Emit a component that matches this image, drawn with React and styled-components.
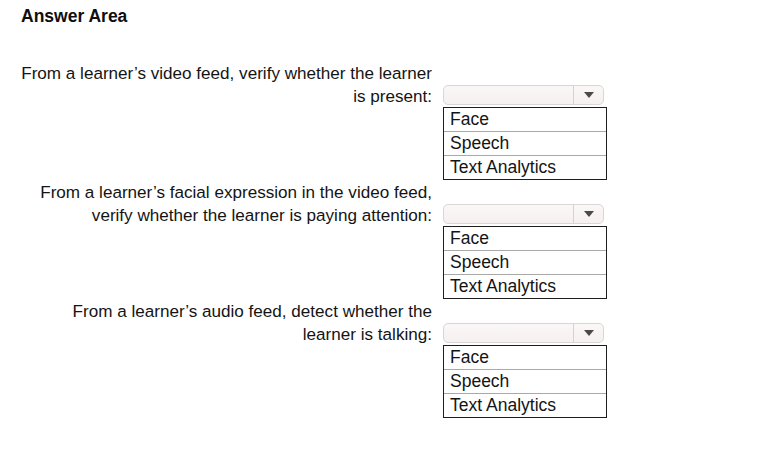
import React from 'react';
import styled, { createGlobalStyle } from 'styled-components';

const GlobalStyle = createGlobalStyle`
  html, body {
    margin: 0;
    padding: 0;
    background: #ffffff;
  }
  body {
    font-family: "Liberation Sans", Arial, sans-serif;
    color: #141414;
  }
`;

const Page = styled.div`
  width: 775px;
  height: 452px;
  padding: 6px 0 0 21px;
  box-sizing: border-box;
  overflow: hidden;
`;

const Heading = styled.h1`
  margin: 0 0 36px 0;
  font-size: 17.5px;
  line-height: 20px;
  font-weight: 700;
  color: #0e0e0e;
`;

const Block = styled.div`
  display: flex;
  align-items: flex-start;
  gap: 11px;
  margin-bottom: 1px;
`;

const Prompt = styled.div`
  width: 411px;
  text-align: right;
  font-size: 17.1px;
  line-height: 23px;
  white-space: nowrap;
`;

const Control = styled.div`
  padding-top: 23px;
  display: flex;
  flex-direction: column;
  gap: 2px;
`;

const Select = styled.div`
  width: 161px;
  height: 20px;
  box-sizing: border-box;
  border: 1px solid #d9d6d6;
  border-radius: 5px;
  background: linear-gradient(#fbf7f7, #f6f0f0);
  display: flex;
  justify-content: flex-end;
`;

const Arrow = styled.div`
  width: 29px;
  border-left: 1px solid #d6d2d2;
  display: flex;
  align-items: center;
  justify-content: center;
`;

const Options = styled.ul`
  list-style: none;
  margin: 0;
  padding: 0;
  width: 164px;
  box-sizing: border-box;
  border: 1px solid #1e1e1e;
`;

const Option = styled.li`
  box-sizing: border-box;
  padding-left: 6px;
  font-size: 17.5px;
  line-height: 23px;
  white-space: nowrap;
  border-top: ${({ $first }) => ($first ? 'none' : '1px solid #a9a9a9')};
  height: ${({ $first }) => ($first ? '23px' : '24px')};
`;

const choices = ['Face', 'Speech', 'Text Analytics'];

const questions = [
  ['From a learner’s video feed, verify whether the learner', 'is present:'],
  ['From a learner’s facial expression in the video feed,', 'verify whether the learner is paying attention:'],
  ['From a learner’s audio feed, detect whether the', 'learner is talking:'],
];

function Dropdown() {
  return (
    <Control>
      <Select>
        <Arrow>
          <svg width="10" height="6" viewBox="0 0 10 6">
            <path d="M0 0 H10 L5 6 Z" fill="#4a4a4a" />
          </svg>
        </Arrow>
      </Select>
      <Options>
        {choices.map((c, i) => (
          <Option key={c} $first={i === 0}>{c}</Option>
        ))}
      </Options>
    </Control>
  );
}

export default function App() {
  return (
    <Page>
      <GlobalStyle />
      <Heading>Answer Area</Heading>
      {questions.map(([a, b]) => (
        <Block key={a}>
          <Prompt>
            {a}
            <br />
            {b}
          </Prompt>
          <Dropdown />
        </Block>
      ))}
    </Page>
  );
}
